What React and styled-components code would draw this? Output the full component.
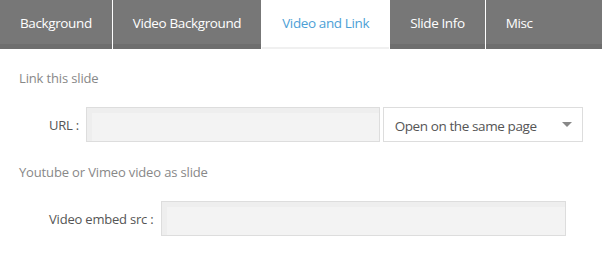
import React, { useState } from "react";
import styled, { createGlobalStyle } from "styled-components";

const GlobalStyle = createGlobalStyle`
  body {
    margin: 0;
    background: #fff;
    font-family: "Open Sans", "Liberation Sans", sans-serif;
  }
`;

const tabs = ["Background", "Video Background", "Video and Link", "Slide Info", "Misc"];

export default function App() {
  const [active, setActive] = useState(2);

  return (
    <>
      <GlobalStyle />
      <Wrapper>
        <TabBar>
          {tabs.map((t, k) => (
            <Tab key={k} active={k === active} last={k === tabs.length - 1} onClick={() => setActive(k)}>
              {t}
            </Tab>
          ))}
        </TabBar>
        <Content>
          <SectionTitle>Link this slide</SectionTitle>
          <FieldRow>
            <Label>URL :</Label>
            <TextInput width="296px" />
            <Select>
              <span>Open on the same page</span>
              <Caret />
            </Select>
          </FieldRow>
          <SectionTitle>Youtube or Vimeo video as slide</SectionTitle>
          <FieldRow>
            <Label>Video embed src :</Label>
            <TextInput width="405px" />
          </FieldRow>
        </Content>
      </Wrapper>
    </>
  );
}

const Wrapper = styled.div`
  width: 602px;
  height: 256px;
  overflow: hidden;
`;

const TabBar = styled.div`
  display: flex;
  height: 49px;
`;

const Tab = styled.div`
  box-sizing: border-box;
  height: 49px;
  padding: 3px 20px 0;
  margin-right: ${(props) => (props.last ? "0" : "1px")};
  flex: ${(props) => (props.last ? "1" : "none")};
  font-size: 13.5px;
  letter-spacing: -0.38px;
  line-height: 41px;
  cursor: pointer;
  white-space: nowrap;
  color: ${(props) => (props.active ? "#4d9fd6" : "#fff")};
  background: ${(props) => (props.active ? "#fff" : "#777")};
  border-bottom: ${(props) => (props.active ? "2px solid #f0f0f0" : "5px solid #6e6e6e")};
`;

const Content = styled.div`
  padding: 20px 19px 0;
`;

const SectionTitle = styled.div`
  font-size: 13px;
  letter-spacing: -0.15px;
  line-height: 18px;
  color: #888;
  margin-bottom: 20px;
`;

const FieldRow = styled.div`
  display: flex;
  align-items: center;
  padding-left: 30px;
  margin-bottom: 21px;
`;

const Label = styled.label`
  font-size: 13px;
  letter-spacing: -0.2px;
  color: #555;
  margin-right: 7px;
  white-space: nowrap;
`;

const TextInput = styled.input`
  box-sizing: border-box;
  width: ${(props) => props.width};
  height: 35px;
  border: 1px solid #ddd;
  background: #f3f3f3;
  box-shadow: inset 5px 5px 0 #eeeeee;
  outline: none;
  padding: 0 10px;
  font-family: inherit;
`;

const Select = styled.div`
  box-sizing: border-box;
  margin-left: 3px;
  width: 202px;
  height: 35px;
  border: 1px solid #ddd;
  background: #fff;
  display: flex;
  align-items: center;
  justify-content: space-between;
  padding: 2px 10px 0 11px;
  font-size: 13.5px;
  letter-spacing: -0.4px;
  color: #555;
  white-space: nowrap;
`;

const Caret = styled.span`
  width: 0;
  height: 0;
  margin-top: -2px;
  border-left: 5px solid transparent;
  border-right: 5px solid transparent;
  border-top: 5px solid #888;
`;
